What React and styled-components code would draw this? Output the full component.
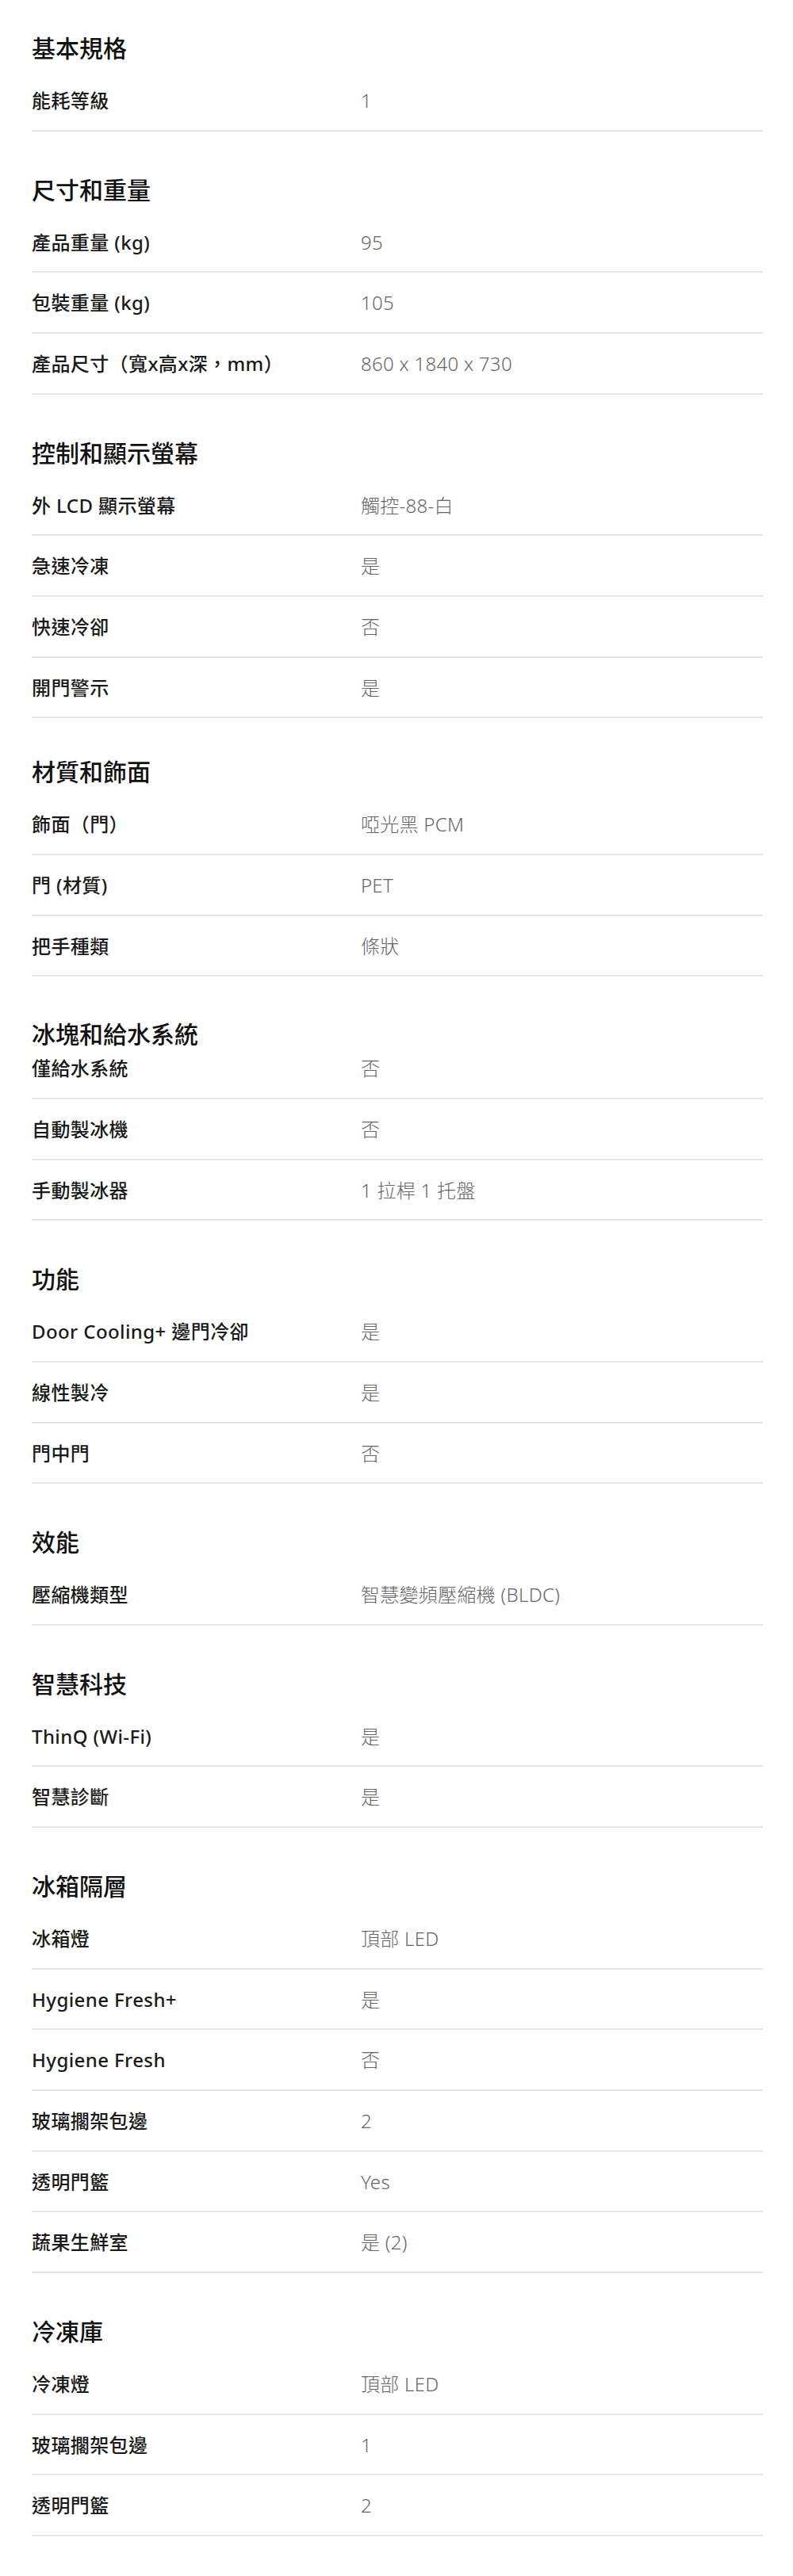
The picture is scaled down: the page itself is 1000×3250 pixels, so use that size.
import React from 'react';
import styled, { createGlobalStyle } from 'styled-components';

const GlobalStyle = createGlobalStyle`
  html, body {
    margin: 0;
    padding: 0;
    background: #fff;
  }
  body {
    font-family: "Noto Sans", "Noto Sans CJK TC", sans-serif;
    color: #111;
  }
`;

const Page = styled.div`
  padding: 41px 38px 40px 40px;
`;

const Section = styled.section`
  margin-top: ${p => p.$gap}px;

  &:first-child {
    margin-top: 0;
  }
`;

const Heading = styled.h2`
  margin: 0 0 ${p => (p.$tight ? 5 : 8)}px 0;
  font-size: 30px;
  line-height: 40px;
  font-weight: 500;
  color: #111;
`;

const Row = styled.div`
  display: grid;
  grid-template-columns: 45% 55%;
  padding: 20px 0 18.67px 0;
  border-bottom: 2px solid #e5e5e5;
  font-size: 24px;
  line-height: 36px;

  &.flush {
    padding-top: 0;
  }
`;

const Label = styled.div`
  font-weight: 500;
  letter-spacing: 0.4px;
  color: #1a1a1a;
`;

const Value = styled.div`
  font-weight: 300;
  letter-spacing: 0.3px;
  color: #666;
`;

const SPECS = [
  {
    title: '基本規格',
    rows: [['能耗等級', '1']],
  },
  {
    title: '尺寸和重量',
    rows: [
      ['產品重量 (kg)', '95'],
      ['包裝重量 (kg)', '105'],
      ['產品尺寸（寬x高x深，mm）', '860 x 1840 x 730'],
    ],
  },
  {
    title: '控制和顯示螢幕',
    rows: [
      ['外 LCD 顯示螢幕', '觸控-88-白'],
      ['急速冷凍', '是'],
      ['快速冷卻', '否'],
      ['開門警示', '是'],
    ],
  },
  {
    title: '材質和飾面',
    gap: 48,
    rows: [
      ['飾面（門）', '啞光黑 PCM'],
      ['門 (材質)', 'PET'],
      ['把手種類', '條狀'],
    ],
  },
  {
    title: '冰塊和給水系統',
    gap: 53,
    tight: true,
    rows: [
      ['僅給水系統', '否'],
      ['自動製冰機', '否'],
      ['手動製冰器', '1 拉桿 1 托盤'],
    ],
  },
  {
    title: '功能',
    rows: [
      ['Door Cooling+ 邊門冷卻', '是'],
      ['線性製冷', '是'],
      ['門中門', '否'],
    ],
  },
  {
    title: '效能',
    rows: [['壓縮機類型', '智慧變頻壓縮機 (BLDC)']],
  },
  {
    title: '智慧科技',
    rows: [
      ['ThinQ (Wi-Fi)', '是'],
      ['智慧診斷', '是'],
    ],
  },
  {
    title: '冰箱隔層',
    rows: [
      ['冰箱燈', '頂部 LED'],
      ['Hygiene Fresh+', '是'],
      ['Hygiene Fresh', '否'],
      ['玻璃擱架包邊', '2'],
      ['透明門籃', 'Yes'],
      ['蔬果生鮮室', '是 (2)'],
    ],
  },
  {
    title: '冷凍庫',
    rows: [
      ['冷凍燈', '頂部 LED'],
      ['玻璃擱架包邊', '1'],
      ['透明門籃', '2'],
    ],
  },
];

const App = () => {
  return (
    <Page lang="zh-TW">
      <GlobalStyle />
      {SPECS.map(section => (
        <Section key={section.title} $gap={section.gap || 54}>
          <Heading $tight={section.tight}>{section.title}</Heading>
          {section.rows.map(([label, value], i) => (
            <Row key={label} className={section.tight && i === 0 ? 'flush' : undefined}>
              <Label>{label}</Label>
              <Value>{value}</Value>
            </Row>
          ))}
        </Section>
      ))}
    </Page>
  );
};

export default App;
